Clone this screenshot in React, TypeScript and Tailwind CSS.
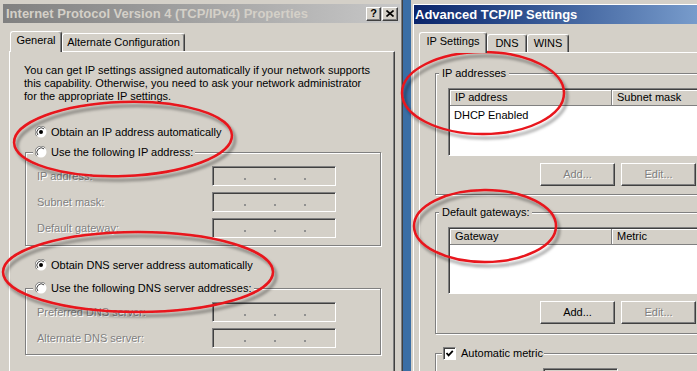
import React from "react";

const raised =
  "border border-t-white border-l-white border-r-[#404040] border-b-[#404040] shadow-[inset_-1px_-1px_0_#808080]";
const sunken =
  "border border-t-[#808080] border-l-[#808080] border-r-white border-b-white shadow-[inset_1px_1px_0_#404040]";
const etched = "border border-[#808080] shadow-[inset_1px_1px_0_#fff,1px_1px_0_#fff]";
const grey = "text-[#808080] [text-shadow:1px_1px_0_#fff]";

function Radio({ on }: { on?: boolean }) {
  return (
    <svg width="12" height="12" viewBox="0 0 12 12" className="shrink-0">
      <circle cx="6" cy="6" r="5.5" fill="#fff" />
      <path d="M1.8 10.2 A5.6 5.6 0 0 1 10.2 1.8" fill="none" stroke="#808080" />
      <path d="M2.9 9.1 A4.4 4.4 0 0 1 9.1 2.9" fill="none" stroke="#404040" />
      {on && <circle cx="6" cy="6" r="2" fill="#000" />}
    </svg>
  );
}

function Tab({ label, active, className }: { label: string; active?: boolean; className: string }) {
  return (
    <div
      className={`${className} flex justify-center pt-[2px] leading-[13px] bg-[#d4d0c8] border-t border-l border-r border-t-white border-l-white border-r-[#404040] shadow-[inset_-1px_0_0_#808080] rounded-t-[3px] ${
        active ? "relative z-10 -mb-px h-[21px]" : "h-[18px]"
      }`}
    >
      {label}
    </div>
  );
}

function IpField() {
  return (
    <div className={`w-[124px] h-[20px] ${sunken} flex items-end pb-[5px] pl-[31px] gap-[28px]`}>
      <span className="w-[2px] h-[2px] bg-[#909090]" />
      <span className="w-[2px] h-[2px] bg-[#909090]" />
      <span className="w-[2px] h-[2px] bg-[#909090]" />
    </div>
  );
}

function Button({ label, off }: { label: string; off?: boolean }) {
  return (
    <div className={`w-[75px] h-[23px] ${raised} flex items-center justify-center ${off ? grey : ""}`}>
      {label}
    </div>
  );
}

function ListView({ a, b, row, className }: { a: string; b: string; row?: string; className: string }) {
  return (
    <div className={`w-[300px] ${className} ${sunken} p-[1px] bg-white`}>
      <div className="flex h-[16px] leading-[15px] bg-[#d4d0c8]">
        <div className="w-[162px] pl-[5px] border-r border-b border-[#808080] shadow-[inset_1px_1px_0_#fff]">{a}</div>
        <div className="flex-1 pl-[5px] border-b border-[#808080] shadow-[inset_1px_1px_0_#fff]">{b}</div>
      </div>
      {row && <div className="pl-[4px] pt-[2px] leading-[14px]">{row}</div>}
    </div>
  );
}

function FieldRow({ label }: { label: string }) {
  return (
    <div className="flex items-center h-[20px]">
      <div className={`w-[175px] ${grey}`}>{label}</div>
      <IpField />
    </div>
  );
}

function Ellipses() {
  return (
    <svg className="absolute left-0 top-0 pointer-events-none" width="697" height="371">
      <defs>
        <filter id="sh" x="-20%" y="-30%" width="140%" height="160%">
          <feDropShadow dx="3" dy="4" stdDeviation="1.6" floodColor="#000" floodOpacity="0.4" />
        </filter>
      </defs>
      <g fill="none" stroke="#e8141c" strokeWidth="2.5" filter="url(#sh)">
        <ellipse cx="123" cy="139" rx="109" ry="37" transform="rotate(-2 123 139)" />
        <ellipse cx="138" cy="272" rx="135" ry="40" />
        <ellipse cx="483" cy="93" rx="81" ry="41" />
        <ellipse cx="485" cy="226" rx="71" ry="36" />
      </g>
    </svg>
  );
}

export default function App() {
  return (
    <div className="relative w-[697px] h-[371px] overflow-hidden flex bg-[#3a6ea5] font-['Liberation_Sans',Arial,sans-serif] text-[11px] text-black">
      {/* Left: IPv4 properties (inactive) */}
      <div className="w-[403px] h-full shrink-0 flex flex-col bg-[#d4d0c8] pl-[3px] pr-[2px] pt-[4px] border-r border-[#404040] shadow-[inset_-1px_0_0_#808080]">
        <div className="h-[19px] flex items-center justify-between pl-[3px] pr-[2px] bg-linear-to-r from-[#808080] to-[#c8c8c8]">
          <span className="font-bold text-[13px] text-[#d4d0c8] whitespace-nowrap">
            Internet Protocol Version 4 (TCP/IPv4) Properties
          </span>
          <div className="flex gap-[1px]">
            <div className={`w-[15px] h-[14px] ${raised} bg-[#d4d0c8] flex items-center justify-center font-bold text-[11px] leading-none`}>
              ?
            </div>
            <div className={`w-[16px] h-[14px] ${raised} bg-[#d4d0c8] flex items-center justify-center`}>
              <svg width="8" height="7" viewBox="0 0 8 7">
                <path d="M0.5 0.5 L7.5 6.5 M7.5 0.5 L0.5 6.5" stroke="#000" strokeWidth="1.6" />
              </svg>
            </div>
          </div>
        </div>

        <div className="mt-[8px] pl-[6px] flex flex-col flex-1">
          <div className="h-[20px] pl-[1px] flex items-end">
            <Tab label="General" active className="w-[52px]" />
            <Tab label="Alternate Configuration" className="w-[123px]" />
          </div>
          <div className="w-[386px] flex-1 flex flex-col border-t border-l border-r border-t-white border-l-white border-r-[#404040] shadow-[inset_-1px_0_0_#808080]">
            <p className="ml-[14px] mt-[12px] leading-[13px] whitespace-nowrap">
              You can get IP settings assigned automatically if your network supports
              <br />
              this capability. Otherwise, you need to ask your network administrator
              <br />
              for the appropriate IP settings.
            </p>

            <div className="ml-[25px] mt-[21px] h-[16px] flex items-center gap-[4px]">
              <Radio on />
              <span>Obtain an IP address automatically</span>
            </div>

            <div className={`relative ml-[15px] mt-[12px] w-[356px] h-[94px] ${etched} pt-[13px] pl-[11px] flex flex-col gap-[6px]`}>
              <div className="absolute left-[7px] top-[-8px] px-[2px] h-[14px] bg-[#d4d0c8] flex items-center gap-[4px]">
                <Radio />
                <span>Use the following IP address:</span>
              </div>
              <FieldRow label="IP address:" />
              <FieldRow label="Subnet mask:" />
              <FieldRow label="Default gateway:" />
            </div>

            <div className="ml-[25px] mt-[11px] h-[16px] flex items-center gap-[4px]">
              <Radio on />
              <span>Obtain DNS server address automatically</span>
            </div>

            <div className={`relative ml-[15px] mt-[15px] w-[356px] h-[67px] ${etched} pt-[13px] pl-[11px] flex flex-col gap-[6px]`}>
              <div className="absolute left-[7px] top-[-8px] px-[2px] h-[14px] bg-[#d4d0c8] flex items-center gap-[4px]">
                <Radio />
                <span>Use the following DNS server addresses:</span>
              </div>
              <FieldRow label="Preferred DNS server:" />
              <FieldRow label="Alternate DNS server:" />
            </div>
          </div>
        </div>
      </div>

      {/* Right: Advanced TCP/IP Settings (active) */}
      <div className="ml-[8px] w-[390px] h-full shrink-0 flex flex-col bg-[#d4d0c8] pl-[2px] pt-[4px]">
        <div className="flex-1 flex flex-col border-t border-l border-white">
          <div className="h-[19px] flex items-center pl-[1px] bg-linear-to-r from-[#0a246a] to-[#a6caf0]">
            <span className="font-bold text-[13px] text-white whitespace-nowrap">Advanced TCP/IP Settings</span>
          </div>

          <div className="mt-[8px] pl-[5px] flex flex-col flex-1">
            <div className="h-[20px] flex items-end">
              <Tab label="IP Settings" active className="w-[68px]" />
              <Tab label="DNS" className="w-[40px]" />
              <Tab label="WINS" className="w-[42px]" />
            </div>
            <div className="flex-1 flex flex-col border-t border-l border-white">
              <div className={`relative ml-[15px] mt-[20px] w-[400px] h-[122px] ${etched} pt-[14px] pl-[12px]`}>
                <div className="absolute left-[3px] top-[-8px] px-[3px] h-[14px] leading-[14px] bg-[#d4d0c8]">
                  IP addresses
                </div>
                <ListView a="IP address" b="Subnet mask" row="DHCP Enabled" className="h-[68px]" />
                <div className="mt-[7px] ml-[92px] flex gap-[6px]">
                  <Button label="Add..." off />
                  <Button label="Edit..." off />
                </div>
              </div>

              <div className={`relative ml-[15px] mt-[17px] w-[400px] h-[122px] ${etched} pt-[14px] pl-[12px]`}>
                <div className="absolute left-[3px] top-[-8px] px-[3px] h-[14px] leading-[14px] bg-[#d4d0c8]">
                  Default gateways:
                </div>
                <ListView a="Gateway" b="Metric" className="h-[67px]" />
                <div className="mt-[7px] ml-[92px] flex gap-[6px]">
                  <Button label="Add..." />
                  <Button label="Edit..." off />
                </div>
              </div>

              <div className={`relative ml-[15px] mt-[19px] w-[400px] h-[60px] ${etched} pt-[14px] pl-[107px]`}>
                <div className="absolute left-[6px] top-[-8px] px-[1px] h-[14px] bg-[#d4d0c8] flex items-center gap-[5px]">
                  <div className={`w-[13px] h-[13px] ${sunken} bg-white flex items-center justify-center`}>
                    <svg width="9" height="9" viewBox="0 0 9 9">
                      <path d="M1.5 4 L3.6 6.3 L7.8 1.8" fill="none" stroke="#000" strokeWidth="1.8" />
                    </svg>
                  </div>
                  <span>Automatic metric</span>
                </div>
                <div className={`w-[75px] h-[22px] ${sunken}`} />
              </div>
            </div>
          </div>
        </div>
      </div>

      <Ellipses />
    </div>
  );
}
